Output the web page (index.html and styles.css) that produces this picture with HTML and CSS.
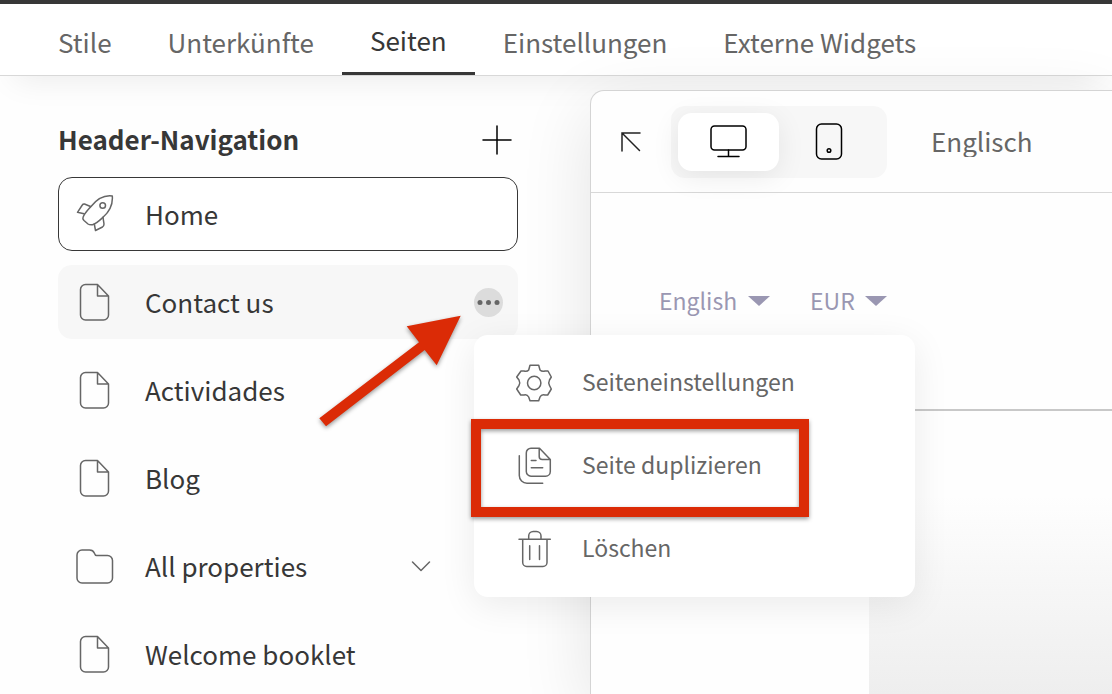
FILE: index.html
```html
<!DOCTYPE html>
<html lang="de">
<head>
    <meta charset="UTF-8">
    <meta name="viewport" content="width=device-width, initial-scale=1.0">
    <title>Seiten</title>
    <link rel="stylesheet" href="styles.css">
</head>
<body>
    <!-- shared icons -->
    <svg class="sprite" aria-hidden="true">
        <symbol id="icon-page" viewBox="0 0 40 40">
            <path d="M10.5 2.5H22.5L33.5 14V33a5 5 0 0 1-5 5H10.5a5 5 0 0 1-5-5V7.500a5 5 0 0 1 5-5zM22.500 2.500V14H33.500"/>
        </symbol>
    </svg>

    <header class="topbar">
        <nav class="tabs">
            <a class="tab" href="#stile">Stile</a>
            <a class="tab" href="#unterkuenfte">Unterkünfte</a>
            <a class="tab active" href="#seiten" aria-current="page">Seiten</a>
            <a class="tab" href="#einstellungen">Einstellungen</a>
            <a class="tab" href="#widgets">Externe Widgets</a>
        </nav>
    </header>

    <main class="layout">
        <aside class="sidebar">
            <div class="sidebar-head">
                <h2>Header-Navigation</h2>
                <button class="icon-button" type="button" aria-label="Seite hinzufügen">
                    <svg class="plus" viewBox="0 0 30 30"><path d="M15 1V29M1 15H29"/></svg>
                </button>
            </div>

            <ul class="pages">
                <li class="page-row selected">
                    <a href="#home">
                        <svg class="icon" viewBox="0 0 40 40">
                            <path d="M37.300 2C30 1 22 5 16 12.500C12 17 9 20 8 23.500Q7.500 25 9 26.500L13 30Q14.500 31 17.500 30.700C21 30 24 27 28 23.300C35 17 38 10 37.300 2z"/>
                            <path d="M15.500 12.500L9.500 10Q8 9.800 7.300 11L2.500 18.300L9 19.700M19.300 30L20.500 36.500L27.500 33Q29 32 29 30L28 23.300"/>
                            <circle cx="27.700" cy="11.500" r="2.800"/>
                        </svg>
                        <span>Home</span>
                    </a>
                </li>
                <li class="page-row hovered">
                    <a href="#contact">
                        <svg class="icon"><use href="#icon-page"/></svg>
                        <span>Contact us</span>
                    </a>
                    <button class="more" type="button" aria-label="Mehr" aria-expanded="true">
                        <svg viewBox="0 0 29 29"><circle cx="6" cy="14.500" r="2.500"/><circle cx="14.500" cy="14.500" r="2.500"/><circle cx="23" cy="14.500" r="2.500"/></svg>
                    </button>
                    <div class="menu">
                        <button type="button">
                            <svg class="icon" viewBox="0 0 40 40">
                                <path d="M16 2.200H24.700L26 7Q28 9 31 8H34L37.300 14L35.500 17Q34 20 35.500 22.500L37.300 26L33.700 32H31Q27.500 31 26 34L24.700 37.800H16L14.700 34Q13 31 10 32H6.700L2.700 26L5 22.500Q6.500 20 5 17L2.700 14L7 8H10Q13 9 14.700 7z"/>
                                <circle cx="20.200" cy="20" r="6.700"/>
                            </svg>
                            <span>Seiteneinstellungen</span>
                        </button>
                        <button type="button">
                            <svg class="icon" viewBox="0 0 40 40">
                                <path d="M17 2.200H25.500L36.300 13.500V25.500a4.700 4.700 0 0 1-4.700 4.700H17a4.700 4.700 0 0 1-4.700-4.700V7a4.700 4.700 0 0 1 4.700-4.800zM25.200 2.200V10.500a3 3 0 0 0 3 3H36.300"/>
                                <path d="M17.300 14.500H22M17.300 21.800H28.700M5.300 9.800V29.500a7.700 7.700 0 0 0 7.700 7.700H28.700"/>
                            </svg>
                            <span>Seite duplizieren</span>
                        </button>
                        <button type="button">
                            <svg class="icon" viewBox="0 0 40 40">
                                <path d="M5 10.200H36.300M14.700 10V7a4.500 4.500 0 0 1 4.500-4.500H22.500a4.500 4.500 0 0 1 4.500 4.500V10M8.700 10.200V33.500a4 4 0 0 0 4 4H29a4 4 0 0 0 4-4V10.200M15.700 16.800V30.500M25.500 16.800V30.500"/>
                            </svg>
                            <span>Löschen</span>
                        </button>
                    </div>
                </li>
                <li class="page-row">
                    <a href="#actividades">
                        <svg class="icon"><use href="#icon-page"/></svg>
                        <span>Actividades</span>
                    </a>
                </li>
                <li class="page-row">
                    <a href="#blog">
                        <svg class="icon"><use href="#icon-page"/></svg>
                        <span>Blog</span>
                    </a>
                </li>
                <li class="page-row folder">
                    <a href="#properties">
                        <svg class="icon" viewBox="0 0 40 40">
                            <path d="M7 4H14.500C17 4 18.500 5 19.300 7C19.800 8.500 20.300 9.500 21.500 9.500H32.500a5 5 0 0 1 5 5V32a5 5 0 0 1-5 5H7a5 5 0 0 1-5-5V9a5 5 0 0 1 5-5z"/>
                        </svg>
                        <span>All properties</span>
                    </a>
                    <button class="icon-button" type="button" aria-label="Aufklappen">
                        <svg class="chevron" viewBox="0 0 20 20"><path d="M1.500 6L10 14.500L18.500 6"/></svg>
                    </button>
                </li>
                <li class="page-row">
                    <a href="#booklet">
                        <svg class="icon"><use href="#icon-page"/></svg>
                        <span>Welcome booklet</span>
                    </a>
                </li>
            </ul>
        </aside>

        <section class="panel">
            <div class="toolbar">
                <button class="icon-button" type="button" aria-label="Vergrößern">
                    <svg class="expand" viewBox="0 0 24 24"><path d="M3 21V3H21M3 3L20.500 20.500"/></svg>
                </button>
                <div class="devices">
                    <button class="device active" type="button" aria-label="Desktop">
                        <svg class="icon" viewBox="0 0 40 40"><rect x="2" y="4" width="35" height="24" rx="3.500"/><path d="M19.500 28V34.500M9 34.500H30"/></svg>
                    </button>
                    <button class="device" type="button" aria-label="Mobil">
                        <svg class="icon" viewBox="0 0 40 40"><rect x="6.500" y="2" width="25" height="35" rx="5"/><circle cx="19" cy="28.500" r="1.800"/></svg>
                    </button>
                </div>
                <select class="preview-language" aria-label="Sprache">
                    <option>Englisch</option>
                </select>
            </div>

            <div class="site">
                <div class="site-head">
                    <label class="picker">
                        <select aria-label="Language"><option>English</option></select>
                        <svg viewBox="0 0 22 10"><path d="M0 0H22L11 10z"/></svg>
                    </label>
                    <label class="picker">
                        <select aria-label="Currency"><option>EUR</option></select>
                        <svg viewBox="0 0 22 10"><path d="M0 0H22L11 10z"/></svg>
                    </label>
                </div>
                <div class="hero"></div>
            </div>
        </section>
    </main>

    <!-- tutorial markers -->
    <svg class="arrow" viewBox="0 0 150 120" aria-hidden="true">
        <path d="M145.700 5.700L91.700 16.300L104 32.300L4.300 108.300L11 116.300L109.700 40L121.700 55.300z"/>
    </svg>
    <div class="marker"></div>
</body>
</html>
```

FILE: styles.css
```css
* {
    box-sizing: border-box;
}

body {
    margin: 0;
    min-height: 100vh;
    display: flex;
    flex-direction: column;
    position: relative;
    background-color: #fefefe;
    color: #373737;
    font-family: "Noto Sans CJK SC", "Noto Sans", sans-serif;
    font-size: 26px;
    line-height: 32px;
}

a {
    color: inherit;
    text-decoration: none;
}

button,
select {
    padding: 0;
    border: none;
    background: none;
    color: inherit;
    font: inherit;
    cursor: pointer;
}

select {
    appearance: none;
    height: 36px;
    padding-bottom: 2px;
}

svg {
    display: block;
    fill: none;
    stroke: #666;
    stroke-width: 1.5;
    stroke-linejoin: round;
    stroke-linecap: round;
}

.sprite {
    position: absolute;
    width: 0;
    height: 0;
}

.icon {
    width: 40px;
    height: 40px;
    flex: none;
}

.topbar {
    border-top: 4px solid #373737;
    border-bottom: 1px solid #d8d8d8;
    background-color: #fff;
    box-shadow: 0 18px 32px -14px rgba(0, 0, 0, 0.08);
}

.tabs {
    display: flex;
    height: 71px;
    padding-left: 30px;
}

.tab {
    padding: 22px 28px 0;
    color: #666;
    white-space: nowrap;
}

.tab.active {
    padding-top: 20px;
    border-bottom: 3px solid #373737;
    color: #373737;
}

.layout {
    flex: 1;
    display: grid;
    grid-template-columns: 590px 1fr;
}

.sidebar {
    padding: 47px 72px 0 58px;
}

.sidebar-head {
    display: flex;
    align-items: center;
    justify-content: space-between;
    height: 34px;
    margin-bottom: 20px;
    padding-right: 6px;
}

h2 {
    margin: 0;
    padding-bottom: 2px;
    font-size: 26px;
    font-weight: 700;
}

.plus {
    width: 30px;
    height: 30px;
    stroke: #000;
}

.pages {
    display: grid;
    gap: 14px;
    margin: 0;
    padding: 0;
    list-style: none;
}

.page-row {
    position: relative;
    display: flex;
    align-items: center;
    height: 74px;
    padding-right: 14px;
    border: 1px solid transparent;
    border-radius: 14px;
}

.page-row a {
    flex: 1;
    display: flex;
    align-items: center;
    gap: 30px;
    padding-left: 16px;
}

.selected {
    border-color: #373737;
    background-color: #fff;
}

.hovered {
    z-index: 1;
    background-color: #f7f7f7;
}

.folder {
    padding-right: 86px;
}

.chevron {
    width: 20px;
    height: 20px;
}

.more {
    width: 29px;
    height: 29px;
    border-radius: 50%;
    background-color: #dcdcdc;
}

.more svg {
    fill: #666;
    stroke: none;
}

.menu {
    position: absolute;
    top: 69px;
    left: 415px;
    width: 441px;
    padding: 6px 0 7px;
    border-radius: 14px;
    background-color: #fff;
    box-shadow: 0 8px 36px rgba(0, 0, 0, 0.08);
}

.menu button {
    display: flex;
    align-items: center;
    gap: 28px;
    width: 100%;
    height: 83px;
    padding-left: 40px;
    color: #666;
    font-size: 23px;
}

.menu span {
    padding-bottom: 4px;
}

.panel {
    display: flex;
    flex-direction: column;
    margin-top: 14px;
    border: 1px solid #d4d4d4;
    border-width: 1px 0 0 1px;
    border-radius: 14px 0 0 0;
    background-color: #fefefe;
    box-shadow: 0 20px 72px rgba(0, 0, 0, 0.11);
}

.toolbar {
    display: flex;
    align-items: center;
    gap: 28px;
    height: 102px;
    padding-left: 28px;
    border-bottom: 1px solid #d8d8d8;
}

.expand {
    width: 24px;
    height: 24px;
    stroke: #222;
    stroke-linejoin: miter;
}

.devices {
    display: flex;
    padding: 7px;
    border-radius: 14px;
    background-color: #f7f7f7;
}

.device {
    display: flex;
    align-items: center;
    justify-content: center;
    width: 101px;
    height: 58px;
    border-radius: 14px;
}

.device.active {
    background-color: #fff;
    box-shadow: 0 6px 28px rgba(0, 0, 0, 0.08);
}

.device svg {
    stroke: #000;
}

.preview-language {
    margin-left: 16px;
    color: #666;
}

.site {
    flex: 1;
    display: flex;
    flex-direction: column;
}

.site-head {
    display: flex;
    gap: 40px;
    height: 218px;
    padding: 92px 0 0 68px;
    border-bottom: 2px solid #c8c8c8;
    color: #9a97b2;
    font-size: 23px;
}

.picker {
    display: flex;
    align-items: center;
    gap: 10px;
    height: 32px;
}

.picker svg {
    width: 22px;
    height: 10px;
    fill: #9a97b2;
    stroke: none;
}

.hero {
    flex: 1;
    margin-left: 278px;
    background: linear-gradient(#fefefe 30%, #f6f6f6 64%, #eee);
}

.arrow {
    position: absolute;
    top: 310px;
    left: 315px;
    z-index: 2;
    width: 150px;
    height: 120px;
    fill: #db2b06;
    stroke: none;
    filter: drop-shadow(0 2px 2px rgba(0, 0, 0, 0.4));
}

.marker {
    position: absolute;
    top: 419px;
    left: 471px;
    z-index: 2;
    width: 338px;
    height: 98px;
    border: 10px solid #db2b06;
    filter: drop-shadow(0 2px 2px rgba(0, 0, 0, 0.4));
}
```
